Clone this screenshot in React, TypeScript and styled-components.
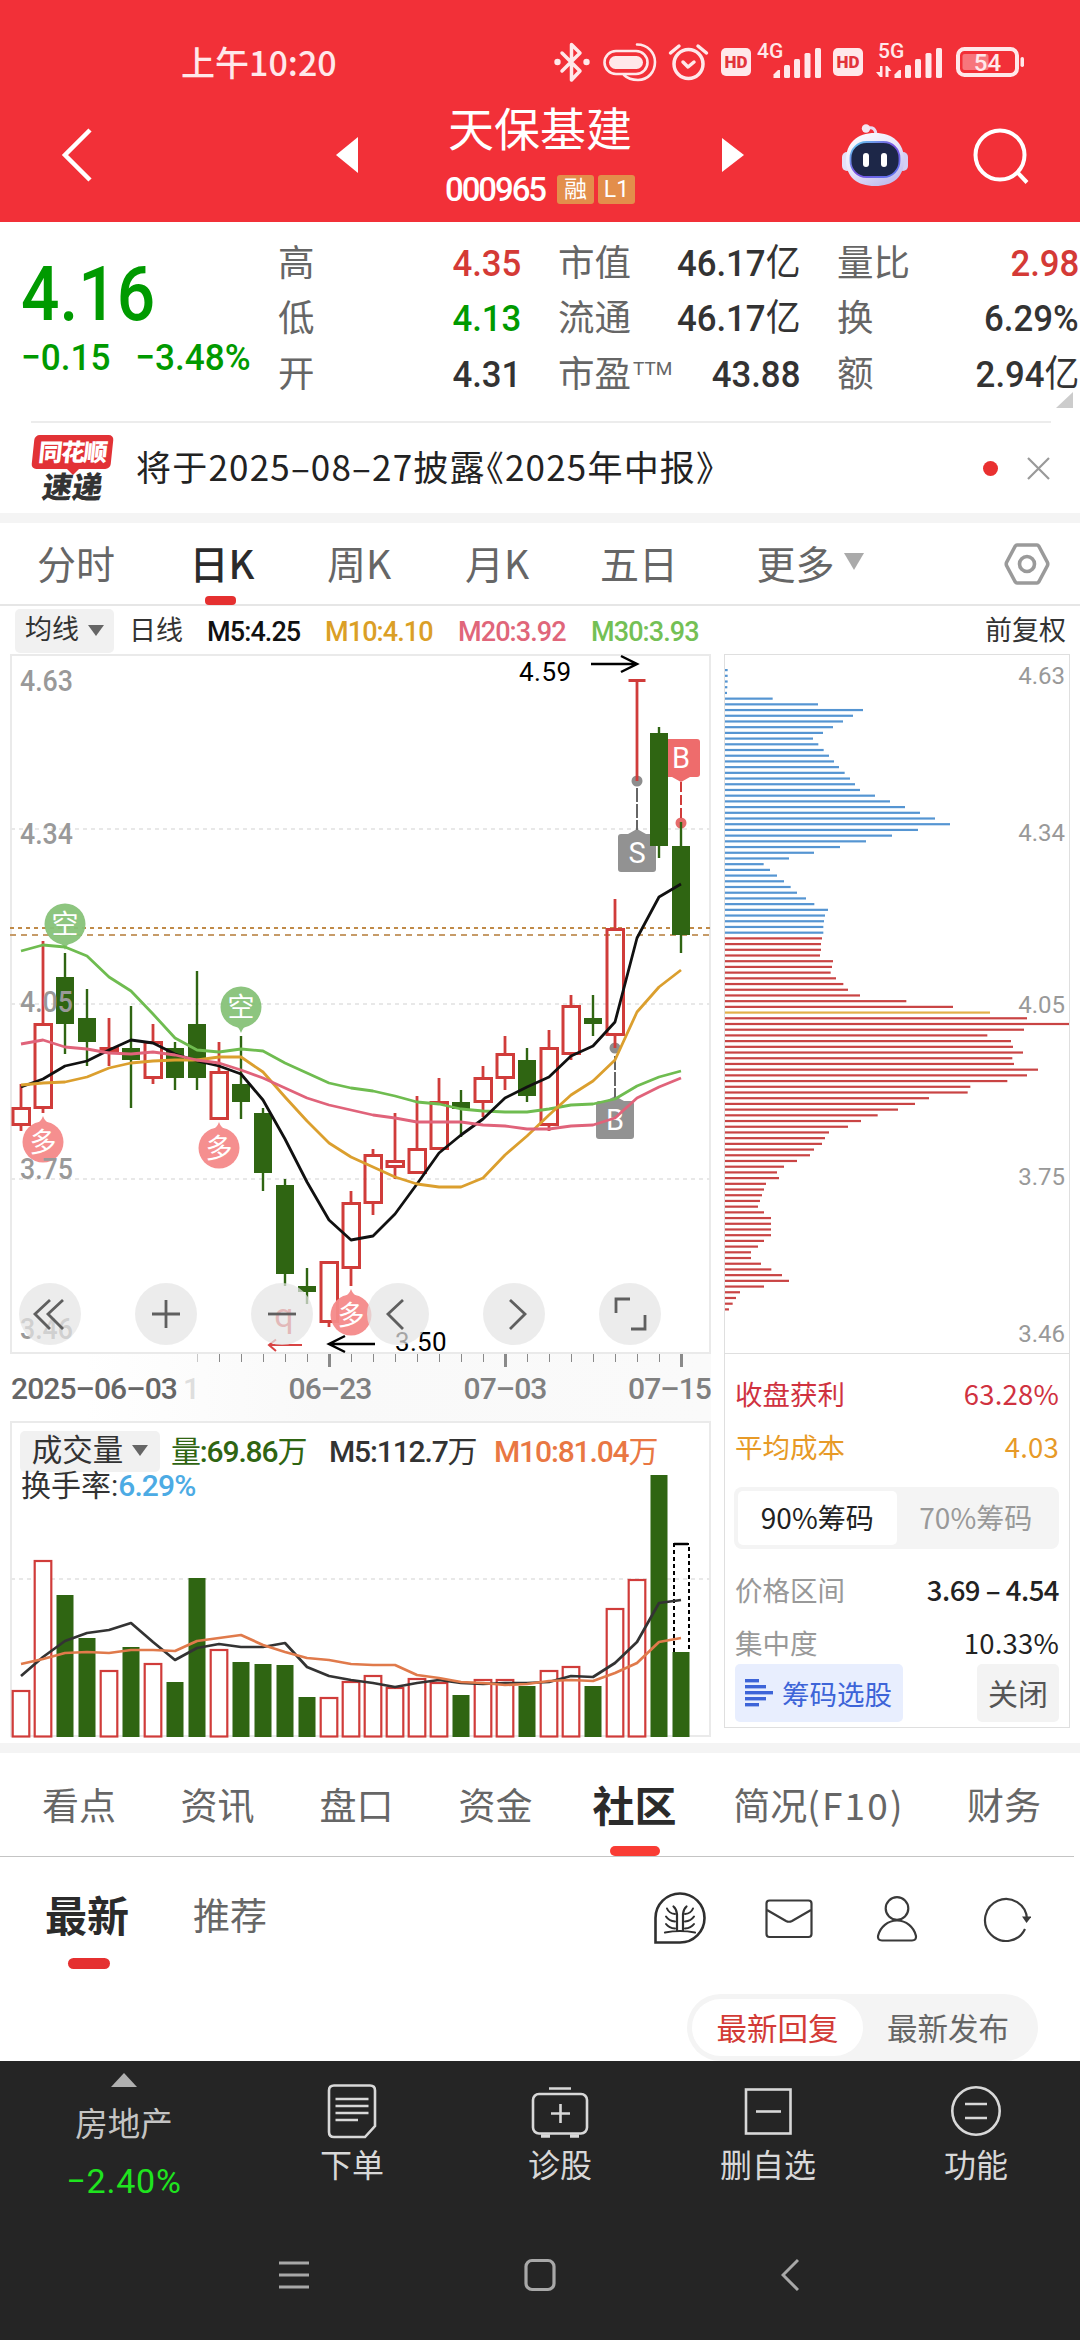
import React from "react";
import styled, { createGlobalStyle, css } from "styled-components";

const GlobalStyle = createGlobalStyle`
  * { box-sizing: border-box; }
  html, body { margin: 0; padding: 0; background: #fff; }
  body {
    width: 1080px;
    font-family: Roboto, "Noto Sans CJK SC", sans-serif;
    color: #333;
  }
  svg { display: block; flex: none; }
  svg text { font-family: Roboto, "Noto Sans CJK SC", sans-serif; }
`;

const RED = "#d03c3a";
const GREEN = "#2f6512";

const Screen = styled.div`
  width: 1080px;
  height: 2340px;
  display: flex;
  flex-direction: column;
  overflow: hidden;
  background: #fff;
`;

/* ---------- header ---------- */

const Header = styled.header`
  height: 222px;
  background: #f23038;
  color: #fff;
`;

const StatusBar = styled.div`
  height: 98px;
  padding: 26px 55px 0 181px;
  display: flex;
  align-items: center;
  justify-content: space-between;
  color: #ffe8ea;
`;

const Clock = styled.span`
  padding-bottom: 1px;
  font: 500 34px/40px "Noto Sans CJK SC", sans-serif;
`;

const TitleBar = styled.div`
  height: 124px;
  padding-bottom: 10px;
  display: grid;
  grid-template-columns: 330px 34px 352px 34px 92px 66px 62px 64px;
  align-items: center;
  justify-items: center;
`;

const BackSlot = styled.div`
  justify-self: start;
  padding-left: 60px;
`;

const TitleBlock = styled.div`
  padding-bottom: 4px;
  display: flex;
  flex-direction: column;
  align-items: center;
  gap: 21px;
`;

const StockName = styled.h1`
  margin: 0;
  font: 400 46px/52px "Noto Sans CJK SC", sans-serif;
`;

const CodeRow = styled.div`
  height: 34px;
  display: flex;
  align-items: center;
`;

const StockCode = styled.span`
  font-size: 33px;
  font-weight: 500;
  line-height: 34px;
  letter-spacing: -2.1px;
  margin-right: 12px;
`;

const Tag = styled.span`
  width: 37px;
  height: 29px;
  margin-right: 4px;
  border-radius: 3px;
  background: #e38e4b;
  font-size: 23px;
  line-height: 29px;
  text-align: center;
  &:last-child { margin-right: 0; }
`;

/* ---------- quote ---------- */

const Quote = styled.section`
  position: relative;
  height: 199px;
  padding-top: 14px;
  display: grid;
  grid-template-columns: 278px 243px 279px 279px;
  align-items: start;
`;

const PriceBlock = styled.div`
  padding-left: 21px;
  color: #009a00;
`;

const Price = styled.div`
  margin-top: 16px;
  font-size: 76px;
  font-weight: 500;
  line-height: 84px;
  transform: scaleX(0.89);
  transform-origin: left;
`;

const Change = styled.div`
  display: flex;
  gap: 26px;
  margin-top: 1px;
  font-size: 37px;
  font-weight: 500;
  line-height: 42px;
  transform: scaleX(0.95);
  transform-origin: left;
`;

const StatColumn = styled.div<{ $indent?: boolean }>`
  padding-left: ${(p) => (p.$indent ? 37 : 0)}px;
  display: grid;
  grid-auto-rows: 55.5px;
`;

const StatRow = styled.div`
  display: flex;
  align-items: center;
  justify-content: space-between;
  font-size: 37px;
  line-height: 44px;
`;

const StatLabel = styled.span`
  display: flex;
  color: #666;
  font-size: 36.5px;
`;

const Sup = styled.sup`
  margin: 6px 0 0 2px;
  font-size: 19px;
  line-height: 19px;
`;

const StatValue = styled.span<{ $color?: string }>`
  color: ${(p) => p.$color || "#333"};
  font-weight: 500;
  transform: scaleX(0.94);
  transform-origin: right;
  white-space: nowrap;
`;

const Han = styled.span`
  font-weight: 400;
`;

const CornerMark = styled.i`
  position: absolute;
  right: 7px;
  bottom: 13px;
  border-style: solid;
  border-width: 0 0 16px 17px;
  border-color: transparent transparent #ccc transparent;
`;

/* ---------- news ---------- */

const News = styled.section`
  height: 92px;
  margin: 0 29px 0 31px;
  border-top: 2px solid #ececec;
  display: flex;
  align-items: center;
`;

const NewsLogo = styled.div`
  position: relative;
  width: 83px;
  height: 67px;
  display: flex;
  flex-direction: column;
  align-items: center;
`;

const LogoTop = styled.span`
  width: 79px;
  height: 34px;
  border-radius: 5px;
  transform: skewX(-6deg);
  background: #e23236;
  color: #fff;
  text-align: center;
  font: 900 24px/32px "Noto Sans CJK SC", sans-serif;
  letter-spacing: -1.5px;
`;

const LogoTip = styled.i`
  border-style: solid;
  border-width: 6px 6px 0;
  border-color: #e23236 transparent transparent;
`;

const LogoBottom = styled.span`
  margin-top: -3px;
  color: #333;
  transform: skewX(-9deg);
  font: 900 30px/27px "Noto Sans CJK SC", sans-serif;
`;

const NewsText = styled.span`
  flex: 1;
  margin-left: 22px;
  padding-bottom: 4px;
  color: #222;
  font: 400 35px/42px "Noto Sans CJK SC", sans-serif;
  letter-spacing: 1.2px;
`;

const OpenQuote = styled.span`
  margin-left: -17px;
`;

const UnreadDot = styled.i`
  width: 15px;
  height: 15px;
  margin-right: 29px;
  border-radius: 50%;
  background: #e93030;
`;

const Band = styled.div`
  height: 10px;
  flex: none;
  background: #f4f4f4;
`;

/* ---------- period tabs ---------- */

const PeriodTabs = styled.nav`
  height: 83px;
  border-bottom: 2px solid #e6e6e6;
  display: grid;
  grid-template-columns: 152px 140px 134px 142px 142px 200px 140px;
  align-items: center;
`;

const PeriodTab = styled.div<{ $active?: boolean }>`
  position: relative;
  height: 100%;
  padding-bottom: 4px;
  display: flex;
  align-items: center;
  justify-content: center;
  gap: 9px;
  color: ${(p) => (p.$active ? "#2b2b2b" : "#666")};
  font: ${(p) => (p.$active ? 500 : 400)} 39px/44px "Noto Sans CJK SC", sans-serif;
  ${(p) =>
    p.$active &&
    css`
      &::after {
        content: "";
        position: absolute;
        left: 53px;
        bottom: -1px;
        width: 31px;
        height: 9px;
        border-radius: 4px;
        background: #e53030;
      }
    `}
`;

const Caret = styled.i<{ $w: number; $h: number; $color: string }>`
  border-style: solid;
  border-width: ${(p) => `${p.$h}px ${p.$w / 2}px 0`};
  border-color: ${(p) => p.$color} transparent transparent;
`;

const SettingSlot = styled.div`
  display: flex;
  justify-content: flex-end;
`;

/* ---------- charts ---------- */

const Averages = styled.div`
  height: 48px;
  padding: 2px 14px 2px 15px;
  display: grid;
  grid-template-columns: 114px 78px 118px 133px 133px 1fr auto;
  align-items: center;
  font-size: 27px;
  line-height: 44px;
`;

const Picker = styled.div<{ $w: number; $h: number; $fs: number }>`
  width: ${(p) => p.$w}px;
  height: ${(p) => p.$h}px;
  padding-bottom: 2px;
  border-radius: 5px;
  background: #f1f1f1;
  display: flex;
  align-items: center;
  justify-content: center;
  gap: 9px;
  color: #333;
  font-size: ${(p) => p.$fs}px;
  line-height: ${(p) => p.$h - 2}px;
`;

const Series = styled.span<{ $color: string }>`
  padding-top: 2px;
  color: ${(p) => p.$color};
  font-weight: 500;
  letter-spacing: -0.9px;
`;

const PlainLabel = styled.span`
  color: #333;
  font-size: 27px;
`;

const ChartArea = styled.section`
  height: 1089px;
  display: flex;
  align-items: flex-start;
`;

const LeftCharts = styled.div`
  width: 724px;
  display: flex;
  flex-direction: column;
`;

const KLine = styled.div`
  position: relative;
  height: 700px;
`;

const Controls = styled.div`
  position: absolute;
  left: 19px;
  bottom: 9px;
  display: flex;
  gap: 54px;
`;

const RoundButton = styled.button`
  width: 62px;
  height: 62px;
  padding: 0;
  border: 0;
  border-radius: 50%;
  background: rgba(229, 229, 229, 0.72);
`;

const DateAxis = styled.div`
  height: 67px;
  width: 711px;
  background: linear-gradient(to right, #fff 12%, #f9f9f9 45%, #fafafa);
`;

const Dates = styled.div`
  margin-top: -1px;
  padding-left: 11px;
  display: grid;
  grid-template-columns: 232px 174px 176px 118px;
  font-size: 30px;
  font-weight: 500;
  line-height: 40px;
  color: #808080;
  & > span { text-align: center; letter-spacing: -0.9px; white-space: nowrap; }
  & > span:first-child { text-align: left; color: #666; }
  & > span:last-child { text-align: right; }
`;

const FadedDigit = styled.span`
  margin-left: 6px;
  color: #dedede;
`;

const Volume = styled.div`
  position: relative;
  height: 322px;
`;

const VolumeLegend = styled.div`
  position: absolute;
  left: 20px;
  top: 10px;
`;

const LegendLine = styled.div`
  display: grid;
  grid-template-columns: 151px 158px 165px auto;
  align-items: center;
  font-size: 30px;
  line-height: 39px;
`;

const LegendItem = styled.span<{ $color: string }>`
  padding-bottom: 1px;
  color: ${(p) => p.$color};
  font-weight: 500;
  letter-spacing: -1.15px;
  white-space: nowrap;
`;

const Turnover = styled.div`
  padding-left: 1px;
  margin-top: -5px;
  color: #333;
  font-size: 30px;
  line-height: 38px;
  & > b { color: #4cabe4; font-weight: 500; letter-spacing: -0.9px; }
`;

const ChipPanel = styled.aside`
  width: 346px;
  height: 1074px;
  border: 1px solid #dfdfdf;
  display: flex;
  flex-direction: column;
`;

const ChipStats = styled.div`
  border-top: 1px solid #dfdfdf;
  padding: 19px 10px 0 10px;
`;

const ChipRows = styled.div`
  display: grid;
  grid-auto-rows: 42px;
  row-gap: 11px;
`;

const ChipRow = styled.div<{ $color: string; $value: string; $bold?: boolean }>`
  padding-bottom: 2px;
  display: flex;
  align-items: center;
  justify-content: space-between;
  font: 400 27.5px/40px "Noto Sans CJK SC", sans-serif;
  color: ${(p) => p.$color};
  & > b {
    color: ${(p) => p.$value};
    font-weight: ${(p) => (p.$bold ? 500 : 400)};
    letter-spacing: ${(p) => (p.$bold ? -0.5 : 0.2)}px;
  }
`;

const Segment = styled.div`
  height: 62px;
  margin: 19px 0 20px -1px;
  padding: 4px;
  border-radius: 8px;
  background: #f4f4f4;
  display: flex;
`;

const SegmentItem = styled.div<{ $active?: boolean }>`
  flex: 1;
  border-radius: 5px;
  background: ${(p) => (p.$active ? "#fff" : "none")};
  color: ${(p) => (p.$active ? "#222" : "#999")};
  text-align: center;
  font: 400 28px/53px "Noto Sans CJK SC", sans-serif;
`;

const ChipActions = styled.div`
  height: 58px;
  display: flex;
  justify-content: space-between;
`;

const PickButton = styled.button`
  width: 168px;
  padding: 0 0 0 10px;
  border: 0;
  border-radius: 5px;
  background: #e8eefe;
  display: flex;
  align-items: center;
  gap: 9px;
  color: #3d64d8;
  font: 400 27.5px/40px "Noto Sans CJK SC", sans-serif;
`;

const CloseButton = styled.button`
  width: 82px;
  padding: 0 0 2px;
  border: 0;
  border-radius: 5px;
  background: #f3f3f3;
  color: #555;
  font: 400 30px/40px "Noto Sans CJK SC", sans-serif;
`;

/* ---------- community ---------- */

const SectionTabs = styled.nav`
  height: 104px;
  width: 1074px;
  padding: 0 0 2px 10px;
  border-bottom: 1px solid #c4c4c4;
  display: grid;
  grid-template-columns: 138px 139px 139px 139px 139px 230px 140px;
`;

const SectionTab = styled.div<{ $active?: boolean }>`
  position: relative;
  display: flex;
  align-items: center;
  justify-content: center;
  color: ${(p) => (p.$active ? "#2b2b2b" : "#666")};
  font: ${(p) => (p.$active ? "700 42px" : "400 37px")} / 50px "Noto Sans CJK SC", sans-serif;
  ${(p) =>
    p.$active &&
    css`
      &::after {
        content: "";
        position: absolute;
        left: 45px;
        bottom: -2px;
        width: 50px;
        height: 10px;
        border-radius: 5px;
        background: #f93c34;
      }
    `}
`;

const Wide = styled.span`
  letter-spacing: 2.2px;
`;

const SubHeader = styled.div`
  height: 117px;
  padding: 0 49px 0 45px;
  display: flex;
  align-items: center;
`;

const SubTab = styled.div<{ $active?: boolean }>`
  position: relative;
  height: 100%;
  padding-bottom: 3px;
  display: flex;
  align-items: center;
  margin-right: 64px;
  color: ${(p) => (p.$active ? "#2b2b2b" : "#666")};
  font: ${(p) => (p.$active ? "700 42px" : "400 37px")} / 50px "Noto Sans CJK SC", sans-serif;
  ${(p) =>
    p.$active &&
    css`
      &::after {
        content: "";
        position: absolute;
        left: 23px;
        bottom: 5px;
        width: 42px;
        height: 11px;
        border-radius: 6px;
        background: #e53030;
      }
    `}
`;

const SubIcons = styled.div`
  margin-left: auto;
  padding-top: 6px;
  display: flex;
  align-items: center;
`;

const IconGap = styled.div<{ $w: number }>`
  width: ${(p) => p.$w}px;
`;

const SortRow = styled.div`
  height: 87px;
  padding: 20px 42px 0 0;
  display: flex;
  justify-content: flex-end;
`;

const SortToggle = styled.div`
  width: 351px;
  height: 67px;
  padding: 5px;
  border-radius: 34px;
  background: #f4f4f4;
  display: grid;
  grid-template-columns: 171px 170px;
`;

const SortItem = styled.div<{ $active?: boolean }>`
  border-radius: 29px;
  background: ${(p) => (p.$active ? "#fff" : "none")};
  color: ${(p) => (p.$active ? "#d33b36" : "#666")};
  text-align: center;
  font: 400 30.5px/56px "Noto Sans CJK SC", sans-serif;
`;

/* ---------- bottom bars ---------- */

const BottomArea = styled.footer`
  flex: 1;
  background: #252525;
  color: #d8d8d8;
`;

const Toolbar = styled.div`
  height: 149px;
  display: grid;
  grid-template-columns: 248px 208px 208px 208px 208px;
`;

const SectorItem = styled.div`
  padding-top: 12px;
  display: flex;
  flex-direction: column;
  align-items: center;
  color: #c4c4c4;
  font: 400 32.5px/48px "Noto Sans CJK SC", sans-serif;
`;

const UpMark = styled.i`
  margin-bottom: 11px;
  border-style: solid;
  border-width: 0 13px 14px;
  border-color: transparent transparent #b0b0b0;
`;

const SectorChange = styled.span`
  margin-top: 11px;
  color: #1fe41f;
  font: 400 34px/48px Roboto, sans-serif;
  letter-spacing: 0.8px;
`;

const ToolItem = styled.div`
  padding-top: 21px;
  display: flex;
  flex-direction: column;
  align-items: center;
  font: 400 32px/48px "Noto Sans CJK SC", sans-serif;
  & > svg { margin-bottom: -3px; }
`;

const SystemNav = styled.div`
  height: 130px;
  padding: 0 163px 0 171px;
  display: grid;
  grid-template-columns: 246px 246px 254px;
  align-items: center;
  justify-items: center;
`;

/* ---------- data ---------- */

const STEP = 22;
const X0 = 21;
const cx = (i: number) => X0 + STEP * i;

type Candle = [up: 0 | 1, top: number, bottom: number, high: number, low: number];

const candles: Candle[] = [
  [1, 1107, 1126, 1084, 1131],
  [1, 1023, 1109, 941, 1113],
  [0, 977, 1024, 953, 1054],
  [0, 1018, 1042, 989, 1066],
  [1, 1047, 1053, 1018, 1066],
  [0, 1048, 1060, 1006, 1108],
  [1, 1041, 1079, 1024, 1084],
  [0, 1048, 1078, 1042, 1090],
  [0, 1024, 1078, 971, 1090],
  [1, 1071, 1120, 1042, 1120],
  [0, 1084, 1102, 1036, 1119],
  [0, 1113, 1173, 1108, 1191],
  [0, 1185, 1274, 1179, 1286],
  [0, 1286, 1292, 1268, 1304],
  [1, 1261, 1323, 1261, 1327],
  [1, 1202, 1269, 1191, 1286],
  [1, 1154, 1204, 1149, 1215],
  [1, 1160, 1168, 1113, 1179],
  [1, 1148, 1174, 1096, 1174],
  [1, 1101, 1150, 1078, 1150],
  [0, 1102, 1109, 1090, 1137],
  [1, 1077, 1103, 1066, 1117],
  [1, 1053, 1079, 1036, 1090],
  [0, 1060, 1096, 1048, 1102],
  [1, 1047, 1126, 1030, 1131],
  [1, 1005, 1055, 995, 1060],
  [0, 1018, 1024, 995, 1036],
  [1, 928, 1036, 899, 1048],
  [1, 679, 682, 681, 781],
  [0, 733, 846, 727, 858],
  [0, 846, 935, 822, 953],
];

const averages = [
  {
    color: "#6fbc50",
    ys: [951, 945, 947, 956, 977, 991, 1014, 1038, 1050, 1052, 1049, 1051, 1063, 1073, 1083, 1088, 1091, 1096, 1102, 1104, 1109, 1111, 1112, 1112, 1109, 1105, 1104, 1099, 1086, 1077, 1071],
  },
  {
    color: "#111",
    ys: [1087, 1079, 1066, 1061, 1050, 1040, 1043, 1054, 1061, 1066, 1074, 1100, 1139, 1182, 1220, 1240, 1236, 1214, 1184, 1153, 1135, 1119, 1098, 1087, 1077, 1056, 1046, 1022, 938, 897, 884],
  },
  {
    color: "#db9f2e",
    ys: [1085, 1083, 1082, 1077, 1068, 1063, 1061, 1060, 1060, 1057, 1057, 1072, 1097, 1121, 1143, 1157, 1167, 1177, 1184, 1187, 1187, 1178, 1155, 1136, 1115, 1095, 1081, 1060, 1012, 987, 970],
  },
  {
    color: "#e0637a",
    ys: [1044, 1040, 1047, 1049, 1053, 1054, 1052, 1055, 1060, 1063, 1070, 1078, 1088, 1098, 1105, 1110, 1115, 1118, 1122, 1122, 1122, 1125, 1126, 1129, 1129, 1126, 1125, 1118, 1098, 1087, 1078],
  },
];

const volumeTops = [
  1690, 1560, 1595, 1638, 1670, 1647, 1663, 1682, 1578, 1649, 1662, 1664, 1665, 1697, 1697, 1681, 1675, 1687, 1678, 1682,
  1695, 1679, 1679, 1686, 1670, 1666, 1686, 1608, 1579, 1475, 1652,
];

const volumeLines = [
  {
    color: "#333",
    ys: [1676, 1657, 1641, 1633, 1630, 1623, 1642, 1660, 1648, 1644, 1647, 1647, 1643, 1667, 1676, 1680, 1683, 1687, 1683, 1680, 1683, 1684, 1683, 1683, 1682, 1676, 1677, 1663, 1642, 1603, 1600],
  },
  {
    color: "#e07a4b",
    ys: [1664, 1659, 1653, 1652, 1653, 1650, 1650, 1651, 1641, 1638, 1635, 1645, 1652, 1658, 1660, 1664, 1665, 1665, 1675, 1678, 1682, 1683, 1685, 1684, 1681, 1680, 1681, 1673, 1663, 1642, 1638],
  },
];

const chips = [
  8, 8, 8, 7, 6, 143, 279, 414, 384, 354, 324, 294, 264, 280, 296, 312, 327, 342, 359, 375, 390, 405, 450, 495, 540, 585,
  630, 675, 579, 501, 423, 345, 267, 192, 116, 135, 156, 177, 197, 216, 243, 268, 309, 300, 297, 295, 295, 291, 288, 288,
  285, 324, 321, 317, 333, 355, 369, 405, 544, 684, 795, 906, 1033, 897, 787, 858, 864, 894, 862, 867, 939, 906, 847, 736,
  728, 612, 570, 519, 458, 408, 369, 312, 300, 291, 267, 255, 216, 177, 156, 162, 123, 117, 111, 105, 99, 117, 138, 138,
  138, 138, 117, 99, 78, 78, 108, 139, 171, 192, 117, 45, 33, 23, 12,
].map((v) => v / 3);

const COST_INDEX = 60;
const PROFIT_INDEX = 47;

const toPoints = (ys: number[]) => ys.map((y, i) => `${cx(i)},${y}`).join(" ");

/* ---------- chart pieces ---------- */

function Balloon({ x, y, up, label }: { x: number; y: number; up: boolean; label: string }) {
  const tip = up ? -26 : 26;
  const base = up ? -17 : 17;
  return (
    <g transform={`translate(${x} ${y})`} opacity={0.95}>
      <circle r={20.5} fill={up ? "#f58a8a" : "#87c279"} />
      <path d={`M-9 ${base} Q-2 ${base * 1.15} 0 ${tip} Q2 ${base * 1.15} 9 ${base}Z`} fill={up ? "#f58a8a" : "#87c279"} />
      <text y={9.5} fontSize={27} fill="#fff" textAnchor="middle">
        {label}
      </text>
    </g>
  );
}

function TradeFlag({ x, top, label, color, down }: { x: number; top: number; label: string; color: string; down?: boolean }) {
  return (
    <g>
      <rect x={x - 19} y={top} width={38} height={38} rx={3} fill={color} />
      <path d={down ? `M${x - 9} ${top + 38}h18l-9 5z` : `M${x - 9} ${top}h18l-9 -5z`} fill={color} />
      <text x={x} y={top + 29} fontSize={29} fill="#fff" textAnchor="middle">
        {label}
      </text>
    </g>
  );
}

function KLineChart() {
  const labels: [string, number][] = [
    ["4.63", 691],
    ["4.34", 844],
    ["4.05", 1012],
    ["3.75", 1179],
    ["3.46", 1339],
  ];
  return (
    <svg width={724} height={700} viewBox="0 654 724 700" fill="none">
      <rect x={11} y={655} width={699} height={698} stroke="#eaeaea" strokeWidth={2} />
      {[829, 1004, 1179].map((y) => (
        <line key={y} x1={11} x2={710} y1={y} y2={y} stroke="#e8e8e8" strokeWidth={2} strokeDasharray="4 4" />
      ))}
      <line x1={10} x2={711} y1={928} y2={928} stroke="#c08a48" strokeWidth={2} strokeDasharray="4 4" />
      <line x1={10} x2={711} y1={935} y2={935} stroke="#c69b68" strokeWidth={2} strokeDasharray="6 5" />
      <TradeFlag x={637} top={834} label="S" color="#929292" />
      <TradeFlag x={615} top={1101} label="B" color="#929292" />
      <TradeFlag x={681} top={739} label="B" color="#ee6c6c" down />
      <circle cx={637} cy={781} r={5.5} fill="#8d8d8d" />
      <circle cx={615} cy={1048} r={5.5} fill="#8d8d8d" />
      <circle cx={681} cy={823} r={5.5} fill="#e66b6b" />
      <line x1={637} x2={637} y1={788} y2={830} stroke="#666" strokeWidth={2} strokeDasharray="14 2" />
      <line x1={615} x2={615} y1={1056} y2={1098} stroke="#666" strokeWidth={2} strokeDasharray="14 2" />
      <line x1={681} x2={681} y1={782} y2={818} stroke={RED} strokeWidth={2} strokeDasharray="10 3" />
      {candles.map(([up, top, bottom, high, low], i) => {
        const x = cx(i);
        if (!up) {
          return (
            <g key={i} fill={GREEN}>
              <rect x={x - 1.2} y={high} width={2.4} height={low - high} />
              <rect x={x - 9} y={top} width={18} height={bottom - top} />
            </g>
          );
        }
        return (
          <g key={i} fill={RED}>
            <rect x={x - 1.4} y={high} width={2.8} height={Math.max(0, top - high)} />
            <rect x={x - 1.4} y={bottom} width={2.8} height={Math.max(0, low - bottom)} />
            {bottom - top < 5 ? (
              <rect x={x - 8.5} y={top} width={17} height={3} />
            ) : (
              <rect x={x - 8} y={top + 1.5} width={16.5} height={bottom - top - 3} fill="none" stroke={RED} strokeWidth={3} />
            )}
          </g>
        );
      })}
      <Balloon x={65} y={924} up={false} label="空" />
      <Balloon x={241} y={1007} up={false} label="空" />
      <Balloon x={43} y={1142} up label="多" />
      <Balloon x={219} y={1148} up label="多" />
      <Balloon x={351} y={1315} up label="多" />
      {averages.map((a) => (
        <polyline key={a.color} points={toPoints(a.ys)} stroke={a.color} strokeWidth={2.8} strokeLinejoin="round" />
      ))}
      {labels.map(([t, y]) => (
        <text key={t} x={20} y={y} fontSize={30} fontWeight={500} fill="#999" textLength={53} lengthAdjust="spacingAndGlyphs">
          {t}
        </text>
      ))}
      <g stroke="#000" strokeWidth={2.5}>
        <path d="M591 664H637M621 656L637 664L621 672" />
        <path d="M375 1344H329M345 1336L329 1344L345 1352" />
      </g>
      <text x={519} y={681} fontSize={26} fill="#000" letterSpacing={0.5}>
        4.59
      </text>
      <text x={395} y={1351} fontSize={26} fill="#000" letterSpacing={0.3}>
        3.50
      </text>
      <text x={284} y={1327} fontSize={34} fill="#dc4a4a" textAnchor="middle">
        q
      </text>
      <path d="M302 1345H270M276 1339.500L269 1345L276 1351" stroke="#d84444" strokeWidth={2} />
    </svg>
  );
}

const controlPaths = [
  "M31 17L16 31L31 46M44 17L29 31L44 46",
  "M17 31H45M31 17V45",
  "M17 31H45",
  "M36 17L21 31L36 46",
  "M27 17L42 31L27 46",
  "M17 30V16H31M46 32V46H32",
];

function ChartControls() {
  return (
    <Controls>
      {controlPaths.map((d) => (
        <RoundButton key={d}>
          <svg width={62} height={62} fill="none" stroke="#5f5f5f" strokeWidth={2.8}>
            <path d={d} />
          </svg>
        </RoundButton>
      ))}
    </Controls>
  );
}

function AxisTicks() {
  const ticks = Array.from({ length: 23 }, (_, k) => k + 8);
  return (
    <svg width={711} height={16}>
      {ticks.map((i) => {
        const major = i === 14 || i === 22 || i === 30;
        return (
          <rect
            key={i}
            x={cx(i) - (major ? 1 : 0)}
            y={0}
            width={major ? 3 : 1}
            height={major ? 13 : 8}
            fill={i === 8 ? "#c8c8c8" : "#8a8a8a"}
          />
        );
      })}
    </svg>
  );
}

function VolumeChart() {
  const base = 1737;
  return (
    <svg width={724} height={322} viewBox="0 1421 724 322" fill="none">
      <rect x={11} y={1422} width={699} height={314} stroke="#eaeaea" strokeWidth={2} />
      <line x1={11} x2={710} y1={1579} y2={1579} stroke="#e8e8e8" strokeWidth={2} strokeDasharray="4 4" />
      {volumeTops.map((top, i) => {
        const up = candles[i][0] === 1;
        return up ? (
          <rect key={i} x={cx(i) - 8.3} y={top + 1} width={16.6} height={base - top - 1.5} stroke={RED} strokeWidth={2.2} fill="#fff" />
        ) : (
          <rect key={i} x={cx(i) - 8.5} y={top} width={17} height={base - top} fill={GREEN} />
        );
      })}
      <path d="M674 1652V1544H689V1652" stroke="#000" strokeWidth={2} strokeDasharray="4 3" />
      <path d="M674 1544H688" stroke="#000" strokeWidth={2.5} />
      {volumeLines.map((l) => (
        <polyline key={l.color} points={toPoints(l.ys)} stroke={l.color} strokeWidth={2.7} strokeLinejoin="round" />
      ))}
    </svg>
  );
}

function ChipChart() {
  const labels: [string, number][] = [
    ["4.63", 684],
    ["4.34", 841],
    ["4.05", 1013],
    ["3.75", 1185],
    ["3.46", 1342],
  ];
  return (
    <svg width={344} height={698} viewBox="725 655 344 698">
      {chips.map((w, i) => (
        <rect
          key={i}
          x={725}
          y={669 + i * 5.708}
          width={w}
          height={2.2}
          fill={i === COST_INDEX ? "#e3b04a" : i < PROFIT_INDEX ? "#5595d2" : "#c94444"}
        />
      ))}
      {labels.map(([t, y]) => (
        <text key={t} x={1065} y={y} fontSize={24} fill="#999" textAnchor="end">
          {t}
        </text>
      ))}
    </svg>
  );
}

/* ---------- icons ---------- */

function StatusIcons() {
  const c = "#ffe8ea";
  return (
    <svg width={472} height={70} viewBox="552 27 472 70" fill="none" stroke={c} strokeWidth={3.5} strokeLinecap="round" strokeLinejoin="round">
      <path d="M561 53L579 71L570.500 80V44.500L579 53L561 71" />
      <g fill={c} stroke="none">
        <circle cx={556.500} cy={62} r={3.2} />
        <circle cx={585.500} cy={62} r={3.2} />
        <rect x={608} y={56} width={34} height={13} rx={6.5} />
      </g>
      <rect x={603.500} y={51} width={43} height={23} rx={11.500} strokeWidth={2.6} />
      <path d="M636 44.500C647 44.500 654 53 654 62C654 72 647 80 637 80C631 80 626 78 623 75" strokeWidth={2.6} />
      <circle cx={687.500} cy={64} r={14.500} />
      <path d="M682 62L687 67L693 62M669.500 53L678 46M705.500 53L697 46" />
      <g fill={c} stroke="none">
        <rect x={720} y={48} width={30} height={28} rx={5} />
        <rect x={832} y={48} width={30} height={28} rx={5} />
      </g>
      <g fill="#e2343b" stroke="none" fontSize={17} fontWeight={900} textAnchor="middle">
        <text x={735} y={68}>HD</text>
        <text x={847} y={68}>HD</text>
      </g>
      <g fill={c} stroke="none" fontSize={21} fontWeight={500}>
        <text x={756} y={58}>4G</text>
        <text x={877} y={58}>5G</text>
      </g>
      <g fill={c} stroke="none">
        {[0, 121].map((dx) => (
          <g key={dx} transform={`translate(${dx} 0)`}>
            <path d="M772.500 78V74.500L777 70H779V78Z" />
            <rect x={783} y={65} width={6} height={13} rx={1.5} />
            <rect x={793} y={59} width={6} height={19} rx={1.5} />
            <rect x={803.500} y={53} width={6} height={25} rx={1.5} />
            <rect x={814} y={48} width={6} height={30} rx={1.5} />
          </g>
        ))}
        <path d="M879 66h2.500v11h-2.500l-4 -5h4zM884.500 66h2l4 5h-3v6h-3z" />
        <rect x={1019.500} y={57} width={3.500} height={10} rx={1.7} />
        <rect x={961.500} y={54} width={26} height={16} rx={2} fill="#f7767c" />
      </g>
      <rect x={957} y={49} width={59} height={26} rx={6.500} strokeWidth={4} />
      <text x={986.500} y={71} fill={c} stroke="none" fontSize={24} fontWeight={500} textAnchor="middle">54</text>
    </svg>
  );
}

function Robot() {
  return (
    <svg width={66} height={63} viewBox="0 0 66 63" fill="none">
      <defs>
        <linearGradient id="shell" x1="0" y1="0" x2="0.6" y2="1">
          <stop offset="0" stopColor="#fff" />
          <stop offset="0.55" stopColor="#e9e6fa" />
          <stop offset="1" stopColor="#c3bfee" />
        </linearGradient>
        <linearGradient id="rim" x1="0" y1="0" x2="1" y2="1">
          <stop offset="0" stopColor="#63d6f2" />
          <stop offset="0.5" stopColor="#7a4fe0" />
          <stop offset="1" stopColor="#5b7cf0" />
        </linearGradient>
      </defs>
      <path d="M24 5C31 2 34 5 34 12" stroke="#e9dcf2" strokeWidth={3} />
      <circle cx={24} cy={4.500} r={4.200} fill="#f3e6f2" />
      <rect x={0} y={28} width={10} height={19} rx={5} fill="#e4e0f8" />
      <rect x={56} y={28} width={10} height={19} rx={5} fill="#d3cff3" />
      <path d="M33 9C51 9 62 19 62 36C62 53 51 62 33 62C15 62 4 53 4 36C4 19 15 9 33 9Z" fill="url(#shell)" />
      <rect x={8.500} y={18} width={49} height={35} rx={16} fill="#1d2748" stroke="url(#rim)" strokeWidth={1.800} />
      <rect x={21} y={29} width={6} height={14} rx={3} fill="#fff" />
      <rect x={39} y={29} width={6} height={14} rx={3} fill="#fff" />
    </svg>
  );
}

function LeafIcon() {
  return (
    <svg width={53} height={53} viewBox="653 1892 53 53" fill="none" stroke="#2f2f2f" strokeWidth={2.600} strokeLinecap="round">
      <path d="M655.500 1942.500V1918A24.500 24.500 0 1 1 680 1942.500Z" />
      <path d="M677 1931V1914Q676.500 1909 673.500 1906.500M683 1931V1914Q683.500 1909 686.500 1906.500M665 1932.500Q680 1929.500 695 1932.500" strokeWidth={2.200} />
      <path d="M667 1908.500Q669 1913.500 675 1914M666 1916.500Q669 1921 675 1921.500M666 1924Q669 1928 675 1928.500M693 1908.500Q691 1913.500 685 1914M694 1916.500Q691 1921 685 1921.500M694 1924Q691 1928 685 1928.500" strokeWidth={2} />
    </svg>
  );
}

function App() {
  return (
    <Screen>
      <GlobalStyle />
      <Header>
        <StatusBar>
          <Clock>上午10:20</Clock>
          <StatusIcons />
        </StatusBar>
        <TitleBar>
          <BackSlot>
            <svg width={34} height={56} fill="none" stroke="#fff" strokeWidth={4.500}>
              <path d="M30 3L5 28L30 53" />
            </svg>
          </BackSlot>
          <svg width={22} height={36} fill="#fff">
            <path d="M22 0V36L0 18Z" />
          </svg>
          <TitleBlock>
            <StockName>天保基建</StockName>
            <CodeRow>
              <StockCode>000965</StockCode>
              <Tag>融</Tag>
              <Tag>L1</Tag>
            </CodeRow>
          </TitleBlock>
          <svg width={22} height={34} fill="#fff">
            <path d="M0 0V34L22 17Z" />
          </svg>
          <span />
          <Robot />
          <span />
          <svg width={58} height={58} fill="none" stroke="#fff" strokeWidth={4}>
            <circle cx={27} cy={29} r={24.500} />
            <path d="M44 46L54 56.500" />
          </svg>
        </TitleBar>
      </Header>

      <Quote>
        <PriceBlock>
          <Price>4.16</Price>
          <Change>
            <span>−0.15</span>
            <span>−3.48%</span>
          </Change>
        </PriceBlock>
        <StatColumn>
          <StatRow><StatLabel>高</StatLabel><StatValue $color="#d43a36">4.35</StatValue></StatRow>
          <StatRow><StatLabel>低</StatLabel><StatValue $color="#009a00">4.13</StatValue></StatRow>
          <StatRow><StatLabel>开</StatLabel><StatValue>4.31</StatValue></StatRow>
        </StatColumn>
        <StatColumn $indent>
          <StatRow><StatLabel>市值</StatLabel><StatValue>46.17<Han>亿</Han></StatValue></StatRow>
          <StatRow><StatLabel>流通</StatLabel><StatValue>46.17<Han>亿</Han></StatValue></StatRow>
          <StatRow><StatLabel>市盈<Sup>TTM</Sup></StatLabel><StatValue>43.88</StatValue></StatRow>
        </StatColumn>
        <StatColumn $indent>
          <StatRow><StatLabel>量比</StatLabel><StatValue $color="#d43a36">2.98</StatValue></StatRow>
          <StatRow><StatLabel>换</StatLabel><StatValue>6.29%</StatValue></StatRow>
          <StatRow><StatLabel>额</StatLabel><StatValue>2.94<Han>亿</Han></StatValue></StatRow>
        </StatColumn>
        <CornerMark />
      </Quote>

      <News>
        <NewsLogo>
          <LogoTop>同花顺</LogoTop>
          <LogoTip />
          <LogoBottom>速递</LogoBottom>
        </NewsLogo>
        <NewsText>将于2025–08–27披露<OpenQuote>《</OpenQuote>2025年中报》</NewsText>
        <UnreadDot />
        <svg width={24} height={24} stroke="#999" strokeWidth={2.200}>
          <path d="M1 2L22 23M22 2L1 23" />
        </svg>
      </News>

      <Band />
      <PeriodTabs>
        <PeriodTab>分时</PeriodTab>
        <PeriodTab $active>日K</PeriodTab>
        <PeriodTab>周K</PeriodTab>
        <PeriodTab>月K</PeriodTab>
        <PeriodTab>五日</PeriodTab>
        <PeriodTab>更多<Caret $w={20} $h={17} $color="#aaa" /></PeriodTab>
        <SettingSlot>
          <svg width={46} height={44} fill="none" stroke="#9a9a9a" strokeWidth={3.600} strokeLinejoin="round">
            <path d="M13 3H33Q34 3 35 4.500L43.500 20.500Q44 22 43.500 23.500L35 39.500Q34 41 33 41H13Q12 41 11 39.500L2.500 23.500Q2 22 2.500 20.500L11 4.500Q12 3 13 3Z" />
            <circle cx={23} cy={22} r={7.500} />
          </svg>
        </SettingSlot>
      </PeriodTabs>

      <Averages>
        <Picker $w={99} $h={44} $fs={27}>均线<Caret $w={17} $h={11} $color="#666" /></Picker>
        <PlainLabel>日线</PlainLabel>
        <Series $color="#111">M5:4.25</Series>
        <Series $color="#db9f26">M10:4.10</Series>
        <Series $color="#e0667a">M20:3.92</Series>
        <Series $color="#74c055">M30:3.93</Series>
        <PlainLabel>前复权</PlainLabel>
      </Averages>

      <ChartArea>
        <LeftCharts>
          <KLine>
            <KLineChart />
            <ChartControls />
          </KLine>
          <DateAxis>
            <AxisTicks />
            <Dates>
              <span>2025–06–03<FadedDigit>1</FadedDigit></span>
              <span>06–23</span>
              <span>07–03</span>
              <span>07–15</span>
            </Dates>
          </DateAxis>
          <Volume>
            <VolumeChart />
            <VolumeLegend>
              <LegendLine>
                <Picker $w={140} $h={41} $fs={30.5}>成交量<Caret $w={16} $h={11} $color="#666" /></Picker>
                <LegendItem $color={GREEN}><Han>量</Han>:69.86<Han>万</Han></LegendItem>
                <LegendItem $color="#333">M5:112.7<Han>万</Han></LegendItem>
                <LegendItem $color="#e97743">M10:81.04<Han>万</Han></LegendItem>
              </LegendLine>
              <Turnover>换手率:<b>6.29%</b></Turnover>
            </VolumeLegend>
          </Volume>
        </LeftCharts>
        <ChipPanel>
          <ChipChart />
          <ChipStats>
            <ChipRows>
              <ChipRow $color="#d0323f" $value="#d0323f">收盘获利<b>63.28%</b></ChipRow>
              <ChipRow $color="#e79a27" $value="#e79a27">平均成本<b>4.03</b></ChipRow>
            </ChipRows>
            <Segment>
              <SegmentItem $active>90%筹码</SegmentItem>
              <SegmentItem>70%筹码</SegmentItem>
            </Segment>
            <ChipRows>
              <ChipRow $color="#999" $value="#222" $bold>价格区间<b>3.69 – 4.54</b></ChipRow>
              <ChipRow $color="#999" $value="#222">集中度<b>10.33%</b></ChipRow>
            </ChipRows>
            <ChipActions>
              <PickButton>
                <svg width={28} height={28} fill="#3d64d8">
                  <rect y={0} width={14} height={3.400} />
                  <rect y={6} width={21} height={3.400} />
                  <rect y={12} width={28} height={3.400} />
                  <rect y={18} width={21} height={3.400} />
                  <rect y={24} width={14} height={3.400} />
                </svg>
                筹码选股
              </PickButton>
              <CloseButton>关闭</CloseButton>
            </ChipActions>
          </ChipStats>
        </ChipPanel>
      </ChartArea>

      <Band />
      <SectionTabs>
        <SectionTab>看点</SectionTab>
        <SectionTab>资讯</SectionTab>
        <SectionTab>盘口</SectionTab>
        <SectionTab>资金</SectionTab>
        <SectionTab $active>社区</SectionTab>
        <SectionTab>简况<Wide>(F10)</Wide></SectionTab>
        <SectionTab>财务</SectionTab>
      </SectionTabs>

      <SubHeader>
        <SubTab $active>最新</SubTab>
        <SubTab>推荐</SubTab>
        <SubIcons>
          <LeafIcon />
          <IconGap $w={59} />
          <svg width={48} height={40} fill="none" stroke="#3a3a3a" strokeWidth={2.200}>
            <rect x={1.500} y={1.500} width={45} height={36.500} rx={3} />
            <path d="M2 11L21 22Q24 23.500 27 22L46 11" />
          </svg>
          <IconGap $w={63} />
          <svg width={42} height={46} fill="none" stroke="#3a3a3a" strokeWidth={2.200}>
            <circle cx={21} cy={12.500} r={11.300} />
            <path d="M21 24.500C30 24.500 38 31 40 40Q40.500 44.500 36 44.500H6Q1.500 44.500 2 40C4 31 12 24.500 21 24.500Z" />
          </svg>
          <IconGap $w={65} />
          <svg width={48} height={46} fill="none" stroke="#3a3a3a" strokeWidth={2.200}>
            <path d="M42 33A21 21 0 1 1 44 23" />
            <path d="M39 20.500H48.500L43.500 27Z" fill="#3a3a3a" stroke="none" />
          </svg>
        </SubIcons>
      </SubHeader>

      <SortRow>
        <SortToggle>
          <SortItem $active>最新回复</SortItem>
          <SortItem>最新发布</SortItem>
        </SortToggle>
      </SortRow>

      <BottomArea>
        <Toolbar>
          <SectorItem>
            <UpMark />
            房地产
            <SectorChange>−2.40%</SectorChange>
          </SectorItem>
          <ToolItem>
            <svg width={60} height={60} fill="none" stroke="#d8d8d8" strokeWidth={2.600}>
              <path d="M12 3.500H48Q53 3.500 53 8.500V44L43 55H12Q7 55 7 50V8.500Q7 3.500 12 3.500Z" />
              <path d="M13.500 17H46.500M13.500 24H46.500M13.500 31H46.500M13.500 38H36" />
            </svg>
            下单
          </ToolItem>
          <ToolItem>
            <svg width={60} height={60} fill="none" stroke="#d8d8d8" strokeWidth={2.600}>
              <path d="M19 6.500H41M21 31.500H40M30.500 22V41" />
              <rect x={3} y={12} width={54} height={39.500} rx={6} />
              <path d="M11 54H20M40 54H49" strokeWidth={3.600} />
            </svg>
            诊股
          </ToolItem>
          <ToolItem>
            <svg width={60} height={60} fill="none" stroke="#d8d8d8" strokeWidth={2.600}>
              <rect x={8} y={7.500} width={44.500} height={44} />
              <path d="M18 29.500H43" />
            </svg>
            删自选
          </ToolItem>
          <ToolItem>
            <svg width={60} height={60} fill="none" stroke="#d8d8d8" strokeWidth={2.600}>
              <circle cx={30} cy={29} r={23.700} />
              <path d="M19 22H41M19 36H41" />
            </svg>
            功能
          </ToolItem>
        </Toolbar>
        <SystemNav>
          <svg width={30} height={30} stroke="#a8a8a8" strokeWidth={3}>
            <path d="M0 3H30M0 15H30M0 27H30" />
          </svg>
          <svg width={32} height={34} fill="none" stroke="#a8a8a8" strokeWidth={3.200}>
            <rect x={2} y={2.500} width={28} height={29} rx={6} />
          </svg>
          <svg width={18} height={34} fill="none" stroke="#a8a8a8" strokeWidth={3}>
            <path d="M17 2L2 17L17 32" />
          </svg>
        </SystemNav>
      </BottomArea>
    </Screen>
  );
}

export default App;
